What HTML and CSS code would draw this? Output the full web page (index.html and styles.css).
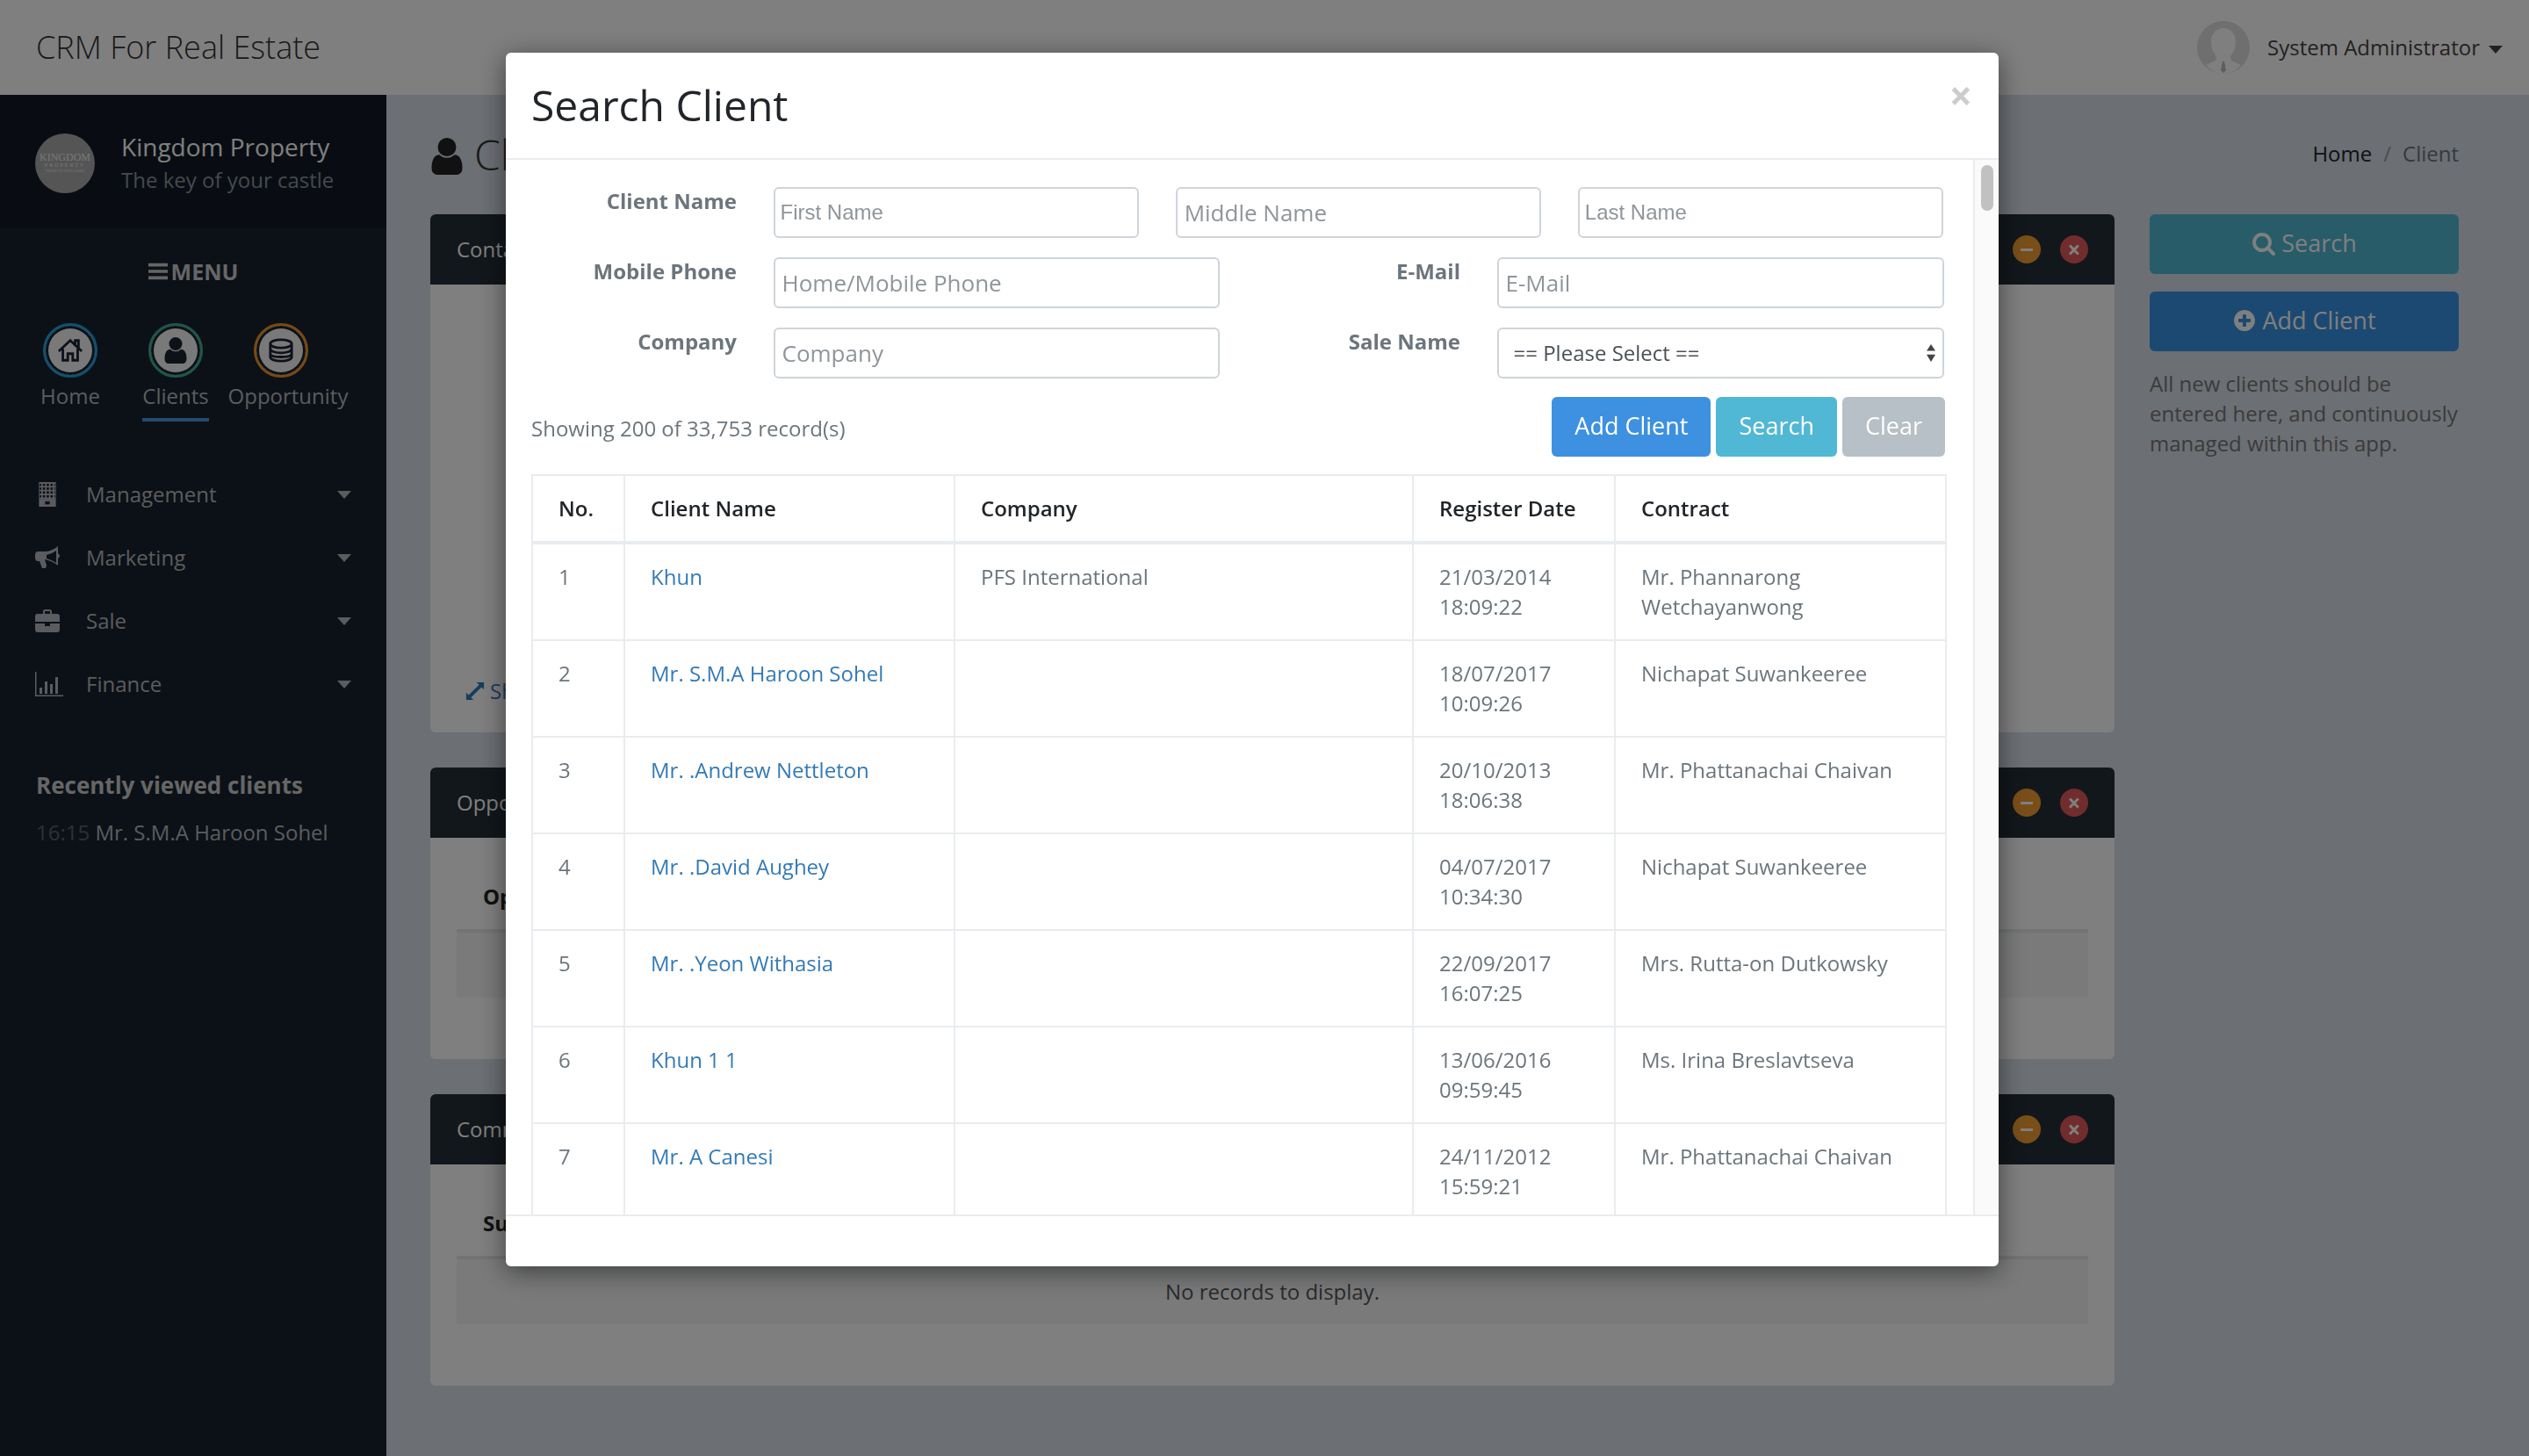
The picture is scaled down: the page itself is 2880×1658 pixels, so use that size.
FILE: index.html
```html
<!DOCTYPE html>
<html lang="en">

<head>
  <meta charset="UTF-8">
  <title>CRM For Real Estate</title>
  <link rel="stylesheet" href="styles.css">
</head>

<body>
  <header class="topbar">
    <div class="brand">CRM For Real Estate</div>
    <div class="user_menu">
      <svg class="avatar" viewBox="0 0 60 60">
        <circle cx="30" cy="30" r="30" fill="#dedede" />
        <path d="M30 8c-9 0-14 7-14 16 0 7 3 13 6 16l-1 5-11 5c5 6 12 10 20 10s15-4 20-10l-11-5-1-5c3-3 6-9 6-16 0-9-5-16-14-16z" fill="#fff" />
        <path d="M29 46h2l2 10-3 3-3-3z" fill="#bbb" />
      </svg>
      <span>System Administrator</span>
      <i class="caret"></i>
    </div>
  </header>

  <div class="layout">
    <aside class="sidebar">
      <div class="side_brand">
        <div class="logo"><b>KINGDOM</b><small>PROPERTY</small><em>THE KEY TO YOUR CASTLE</em></div>
        <div>
          <div class="side_name">Kingdom Property</div>
          <div class="side_tag">The key of your castle</div>
        </div>
      </div>
      <div class="menu_title">
        <svg class="bars" viewBox="0 0 24 20"><path d="M0 0h24v4H0zM0 8h24v4H0zM0 16h24v4H0z" /></svg>MENU
      </div>
      <nav class="shortcuts">
        <a class="shortcut">
          <span class="ring ring_blue">
            <svg class="icon_line" viewBox="0 0 32 32"><path d="M2 17L16 4l14 13M22 9V4h4v9M7 14v14h6v-8h6v8h6V14" /></svg>
          </span>
          <span>Home</span>
        </a>
        <a class="shortcut active">
          <span class="ring ring_green">
            <svg class="icon_bust" viewBox="256 128 1280 1536"><path d="M1536 1399q0 109-62.5 187t-150.5 78h-854q-88 0-150.5-78t-62.5-187q0-85 8.5-160.5t31.5-152 58.5-131 94-89 134.5-34.5q131 128 313 128t313-128q76 0 134.5 34.5t94 89 58.5 131 31.5 152 8.5 160.5zm-256-887q0 159-112.5 271.5t-271.5 112.5-271.5-112.5-112.5-271.5 112.5-271.5 271.5-112.5 271.5 112.5 112.5 271.5z" /></svg>
          </span>
          <span>Clients</span>
        </a>
        <a class="shortcut shortcut_last">
          <span class="ring ring_orange">
            <svg class="icon_line" viewBox="0 0 32 32"><path d="M3 8c0-3 6-5 13-5s13 2 13 5v16c0 3-6 5-13 5S3 27 3 24zM3 8c0 3 6 5 13 5s13-2 13-5M3 14c0 3 6 5 13 5s13-2 13-5M3 20c0 3 6 4 13 4s13-1 13-4" /></svg>
          </span>
          <span>Opportunity</span>
        </a>
      </nav>
      <ul class="side_menu">
        <li>
          <svg class="side_icon" viewBox="0 0 28 32">
            <defs>
              <pattern id="windows" width="5" height="5" patternUnits="userSpaceOnUse" x="3" y="2"><rect width="3" height="3" fill="#18222f" /></pattern>
            </defs>
            <rect x="3" width="22" height="32" />
            <rect x="4" y="2" width="20" height="20" fill="url(#windows)" />
            <rect x="11" y="25" width="6" height="4" fill="#18222f" />
          </svg>
          <span>Management</span><i class="caret"></i>
        </li>
        <li>
          <svg class="side_icon" viewBox="0 0 28 28"><path d="M26 1v8c1 1 2 2 2 3s-1 2-2 3v8c-5-4-10-6-15-7l2 7-1 3H8L5 18H3c-2 0-3-2-3-4v-3c0-2 1-4 3-4h8c5 0 10-2 15-6zm-2 5c-3 2-7 4-11 5v4c4 1 8 3 11 5z" /></svg>
          <span>Marketing</span><i class="caret"></i>
        </li>
        <li>
          <svg class="side_icon" viewBox="0 0 28 28"><path fill-rule="evenodd" d="M9 3c0-1 1-2 2-2h6c1 0 2 1 2 2v3h6c2 0 3 1 3 3v6H0V9c0-2 1-3 3-3h6zm2 0v3h6V3zM0 17h11v3h6v-3h11v7c0 2-1 3-3 3H3c-2 0-3-1-3-3z" /></svg>
          <span>Sale</span><i class="caret"></i>
        </li>
        <li>
          <svg class="side_icon side_icon_wide" viewBox="0 0 32 28"><path d="M0 0h1.500v26.500H32V28H0zM5 18h3v7H5zM11 11h3v14h-3zM17 14h3v11h-3zM23 6h3v19h-3z" /></svg>
          <span>Finance</span><i class="caret"></i>
        </li>
      </ul>
      <div class="recent">
        <h4>Recently viewed clients</h4>
        <p><span class="recent_time">16:15</span> Mr. S.M.A Haroon Sohel</p>
      </div>
    </aside>

    <main class="content">
      <div class="page_head">
        <h1>
          <svg viewBox="256 128 1280 1536"><path d="M1536 1399q0 109-62.5 187t-150.5 78h-854q-88 0-150.5-78t-62.5-187q0-85 8.5-160.5t31.5-152 58.5-131 94-89 134.5-34.5q131 128 313 128t313-128q76 0 134.5 34.5t94 89 58.5 131 31.5 152 8.5 160.5zm-256-887q0 159-112.5 271.5t-271.5 112.5-271.5-112.5-112.5-271.5 112.5-271.5 271.5-112.5 271.5 112.5 112.5 271.5z" /></svg>
          Client
        </h1>
        <div class="breadcrumb"><a>Home</a><i>/</i><span>Client</span></div>
      </div>
      <div class="columns">
        <div class="panels">
          <section class="panel panel_tall">
            <div class="panel_head">
              <span>Contact</span>
              <div class="panel_tools"><i class="tool tool_min"></i><i class="tool tool_close">&times;</i></div>
            </div>
            <div class="panel_body">
              <a class="show_link">
                <svg viewBox="0 0 24 24"><path d="M14 1h9v9l-3-3-13 13 3 3H1v-9l3 3L17 4z" /></svg>
                Show more
              </a>
            </div>
          </section>
          <section class="panel">
            <div class="panel_head">
              <span>Opportunity</span>
              <div class="panel_tools"><i class="tool tool_min"></i><i class="tool tool_close">&times;</i></div>
            </div>
            <div class="panel_body">
              <div class="panel_sub">Opportunity</div>
              <div class="no_records"></div>
            </div>
          </section>
          <section class="panel">
            <div class="panel_head">
              <span>Communication</span>
              <div class="panel_tools"><i class="tool tool_min"></i><i class="tool tool_close">&times;</i></div>
            </div>
            <div class="panel_body">
              <div class="panel_sub">Subject</div>
              <div class="no_records">No records to display.</div>
            </div>
          </section>
        </div>
        <div class="side_actions">
          <a class="action action_search">
            <svg viewBox="0 0 1792 1792"><path d="M1216 832q0-185-131.500-316.500t-316.500-131.500-316.500 131.500-131.500 316.500 131.500 316.500 316.500 131.500 316.500-131.500 131.500-316.500zm512 832q0 52-38 90t-90 38q-54 0-90-38l-343-342q-179 124-399 124-143 0-273.500-55.500t-225-150-150-225-55.500-273.500 55.500-273.500 150-225 225-150 273.500-55.500 273.500 55.500 225 150 150 225 55.500 273.500q0 220-124 399l343 343q37 37 37 90z" /></svg>
            Search
          </a>
          <a class="action action_add">
            <svg viewBox="0 0 1792 1792"><path d="M1344 960v-128q0-26-19-45t-45-19h-256v-256q0-26-19-45t-45-19h-128q-26 0-45 19t-19 45v256h-256q-26 0-45 19t-19 45v128q0 26 19 45t45 19h256v256q0 26 19 45t45 19h128q26 0 45-19t19-45v-256h256q26 0 45-19t19-45zm320-64q0 209-103 385.500t-279.500 279.500-385.500 103-385.500-103-279.500-279.500-103-385.500 103-385.500 279.500-279.500 385.500-103 385.500 103 279.500 279.500 103 385.500z" /></svg>
            Add Client
          </a>
          <p>All new clients should be entered here, and continuously managed within this app.</p>
        </div>
      </div>
    </main>
  </div>

  <div class="backdrop"></div>

  <div class="modal">
    <div class="modal_head">
      <h2>Search Client</h2>
      <span class="modal_close">&times;</span>
    </div>
    <div class="modal_body">
      <div class="modal_scroll">
        <div class="form_row form_row_three">
          <label>Client Name</label>
          <input class="input_small" type="text" placeholder="First Name">
          <input type="text" placeholder="Middle Name">
          <input class="input_small" type="text" placeholder="Last Name">
        </div>
        <div class="form_row">
          <label>Mobile Phone</label>
          <input type="text" placeholder="Home/Mobile Phone">
          <label>E-Mail</label>
          <input type="text" placeholder="E-Mail">
        </div>
        <div class="form_row">
          <label>Company</label>
          <input type="text" placeholder="Company">
          <label>Sale Name</label>
          <div class="select_wrap">
            <select>
              <option>== Please Select ==</option>
            </select>
            <svg viewBox="0 0 12 24"><path d="M6 0l6 9H0zM0 14h12l-6 10z" /></svg>
          </div>
        </div>
        <div class="toolbar">
          <span class="record_count">Showing 200 of 33,753 record(s)</span>
          <div class="toolbar_buttons">
            <button class="btn_primary">Add Client</button>
            <button class="btn_info">Search</button>
            <button class="btn_clear">Clear</button>
          </div>
        </div>
        <table class="client_table">
          <colgroup>
            <col class="col_no">
            <col class="col_name">
            <col class="col_company">
            <col class="col_date">
            <col class="col_contract">
          </colgroup>
          <thead>
            <tr>
              <th>No.</th>
              <th>Client Name</th>
              <th>Company</th>
              <th>Register Date</th>
              <th>Contract</th>
            </tr>
          </thead>
          <tbody>
            <tr>
              <td>1</td>
              <td><a>Khun</a></td>
              <td>PFS International</td>
              <td>21/03/2014<br>18:09:22</td>
              <td>Mr. Phannarong Wetchayanwong</td>
            </tr>
            <tr>
              <td>2</td>
              <td><a>Mr. S.M.A Haroon Sohel</a></td>
              <td></td>
              <td>18/07/2017<br>10:09:26</td>
              <td>Nichapat Suwankeeree</td>
            </tr>
            <tr>
              <td>3</td>
              <td><a>Mr. .Andrew Nettleton</a></td>
              <td></td>
              <td>20/10/2013<br>18:06:38</td>
              <td>Mr. Phattanachai Chaivan</td>
            </tr>
            <tr>
              <td>4</td>
              <td><a>Mr. .David Aughey</a></td>
              <td></td>
              <td>04/07/2017<br>10:34:30</td>
              <td>Nichapat Suwankeeree</td>
            </tr>
            <tr>
              <td>5</td>
              <td><a>Mr. .Yeon Withasia</a></td>
              <td></td>
              <td>22/09/2017<br>16:07:25</td>
              <td>Mrs. Rutta-on Dutkowsky</td>
            </tr>
            <tr>
              <td>6</td>
              <td><a>Khun 1 1</a></td>
              <td></td>
              <td>13/06/2016<br>09:59:45</td>
              <td>Ms. Irina Breslavtseva</td>
            </tr>
            <tr>
              <td>7</td>
              <td><a>Mr. A Canesi</a></td>
              <td></td>
              <td>24/11/2012<br>15:59:21</td>
              <td>Mr. Phattanachai Chaivan</td>
            </tr>
          </tbody>
        </table>
      </div>
      <div class="scroll_track"><div class="scroll_thumb"></div></div>
    </div>
    <div class="modal_foot"></div>
  </div>
</body>

</html>
```

FILE: styles.css
```css
* {
  box-sizing: border-box;
}

html,
body {
  height: 100%;
}

body {
  margin: 0;
  height: 1658px;
  display: flex;
  flex-direction: column;
  overflow: hidden;
  font-family: "Open Sans", sans-serif;
  font-size: 24px;
  line-height: 34px;
  color: #6c757d;
  background: #d8dee8;
}

/* top bar */
.topbar {
  height: 108px;
  flex: none;
  display: flex;
  justify-content: space-between;
  align-items: center;
  padding: 0 30px 0 41px;
  background: #fff;
}

.brand {
  font-size: 36px;
  font-weight: 300;
  color: #333;
}

.user_menu {
  display: flex;
  align-items: center;
  color: #444;
}

.avatar {
  width: 60px;
  height: 60px;
  margin-right: 20px;
}

.caret {
  display: block;
  width: 0;
  height: 0;
  border-top: 9px solid currentColor;
  border-left: 8px solid transparent;
  border-right: 8px solid transparent;
}

.user_menu .caret {
  margin-left: 10px;
  margin-top: 4px;
}

.layout {
  flex: 1;
  display: flex;
  min-height: 0;
}

/* sidebar */
.sidebar {
  width: 440px;
  flex: none;
  background: #18222f;
  color: #fff;
}

.side_brand {
  height: 152px;
  display: flex;
  align-items: center;
  gap: 30px;
  padding: 4px 0 0 40px;
  background: #121a26;
}

.logo {
  width: 68px;
  height: 68px;
  border-radius: 50%;
  background: #aaa;
  display: flex;
  flex-direction: column;
  align-items: center;
  justify-content: center;
  font-family: "Liberation Serif", serif;
  line-height: 9px;
  color: #eee;
}

.logo b {
  font-size: 12px;
  font-weight: 400;
}

.logo small {
  font-size: 6px;
  letter-spacing: 2px;
}

.logo em {
  font-size: 3.5px;
  line-height: 5px;
  font-style: normal;
  white-space: nowrap;
}

.side_name {
  font-size: 28px;
  line-height: 38px;
  font-weight: 500;
}

.side_tag {
  line-height: 38px;
  color: #8c939b;
}

.menu_title {
  height: 98px;
  display: flex;
  justify-content: center;
  align-items: center;
  font-size: 25px;
  font-weight: 700;
  color: #ccc;
}

.bars {
  width: 22px;
  height: 20px;
  margin-right: 4px;
  fill: #ccc;
}

.shortcuts {
  display: flex;
  height: 122px;
  margin-top: 10px;
}

.shortcut {
  position: relative;
  display: flex;
  flex-direction: column;
  align-items: center;
  color: #b4b9be;
}

.shortcut:nth-child(1) {
  width: 160px;
}

.shortcut:nth-child(2) {
  width: 80px;
}

.shortcut_last {
  width: 160px;
  margin-left: 8px;
}

.shortcut_last .ring {
  margin-right: 16px;
}

.ring {
  width: 62px;
  height: 62px;
  border-radius: 50%;
  border: 3px solid;
  display: flex;
  align-items: center;
  justify-content: center;
  margin-bottom: 4px;
  box-shadow: inset 0 0 0 3px #18222f, inset 0 0 0 40px #f2f2f2;
}

.icon_line {
  width: 30px;
  height: 30px;
  fill: none;
  stroke: #1b2530;
  stroke-width: 3;
}

.icon_bust {
  width: 26px;
  height: 30px;
  fill: #1b2530;
}

.ring_blue {
  border-color: #27a3dc;
}

.ring_green {
  border-color: #3fae96;
}

.ring_orange {
  border-color: #f0942a;
}

.shortcut.active::after {
  content: "";
  position: absolute;
  left: 2px;
  right: 2px;
  top: 108px;
  height: 4px;
  background: #4c94d8;
}

.side_menu {
  list-style: none;
  margin: 0;
  padding: 37px 40px 0 40px;
  color: #b4b9be;
}

.side_menu li {
  height: 72px;
  display: flex;
  align-items: center;
}

.side_menu span {
  flex: 1;
}

.side_icon {
  width: 28px;
  height: 28px;
  margin-right: 30px;
  fill: #b4b9be;
}

.side_icon_wide {
  width: 32px;
  margin-right: 26px;
}

.recent {
  margin-top: 62px;
  padding-left: 41px;
}

.recent h4 {
  margin: 0 0 20px;
  font-size: 26px;
  line-height: 34px;
  font-weight: 700;
  color: #ccc;
}

.recent p {
  margin: 0;
  color: #b4b9be;
}

.recent_time {
  color: #5a626b;
}

/* page content */
.content {
  flex: 1;
  padding: 0 80px 0 50px;
}

.page_head {
  height: 136px;
  display: flex;
  justify-content: space-between;
  padding-top: 46px;
}

.page_head h1 {
  margin: 0;
  display: flex;
  align-items: flex-start;
  gap: 12px;
  font-size: 48px;
  line-height: 44px;
  font-weight: 300;
  color: #333;
}

.page_head h1 svg {
  width: 38px;
  height: 42px;
  margin-top: 3px;
  fill: #222;
}

.breadcrumb {
  display: flex;
  color: #6c757d;
  padding-top: 4px;
}

.breadcrumb a {
  color: #222;
}

.breadcrumb i {
  font-style: normal;
  color: #999;
  margin: 0 13px;
}

.columns {
  display: flex;
  gap: 40px;
}

.panels {
  width: 1918px;
  flex: none;
  display: flex;
  flex-direction: column;
  gap: 40px;
}

.panel {
  height: 332px;
  display: flex;
  flex-direction: column;
  background: #fff;
  border-radius: 6px;
}

.panel_tall {
  height: 590px;
}

.panel_head {
  height: 80px;
  flex: none;
  display: flex;
  justify-content: space-between;
  align-items: center;
  padding: 0 30px;
  border-radius: 6px 6px 0 0;
  background: #242e36;
  color: #fff;
}

.panel_tools {
  display: flex;
  gap: 22px;
}

.tool {
  width: 32px;
  height: 32px;
  border-radius: 50%;
  display: flex;
  align-items: center;
  justify-content: center;
  font-style: normal;
  font-weight: 700;
  font-size: 26px;
  color: #fff;
}

.tool_min {
  background: #f29d33;
}

.tool_min::before {
  content: "";
  width: 14px;
  height: 3px;
  background: #fff;
}

.tool_close {
  background: #e2585a;
}

.panel_body {
  flex: 1;
  display: flex;
  flex-direction: column;
  padding: 0 30px;
}

.show_link {
  margin-top: auto;
  margin-bottom: 30px;
  padding-left: 10px;
  display: flex;
  align-items: center;
  gap: 6px;
  color: #337ab7;
}

.show_link svg {
  width: 22px;
  height: 22px;
  fill: #337ab7;
}

.panel_sub {
  margin-top: 50px;
  padding-left: 30px;
  font-weight: 700;
  color: #222;
}

.no_records {
  height: 78px;
  margin-top: 20px;
  display: flex;
  justify-content: center;
  align-items: center;
  border-top: 4px solid #e4e6ea;
  background: #f4f5f7;
  color: #555;
}

.side_actions {
  width: 352px;
  flex: none;
}

.action {
  height: 68px;
  display: flex;
  justify-content: center;
  align-items: center;
  gap: 6px;
  margin-bottom: 20px;
  padding-bottom: 2px;
  border-radius: 6px;
  color: #fff;
  font-size: 27px;
}

.action svg {
  width: 28px;
  height: 28px;
  fill: #fff;
}

.action_search {
  background: #50b8d3;
}

.action_add {
  background: #3893e5;
}

.side_actions p {
  margin: 20px 0 0;
  color: #777;
}

.backdrop {
  position: fixed;
  inset: 0;
  background: rgba(0, 0, 0, .5);
}

/* modal */
.modal {
  position: fixed;
  left: 576px;
  top: 60px;
  width: 1700px;
  height: 1382px;
  display: flex;
  flex-direction: column;
  border-radius: 6px;
  background: #fff;
  box-shadow: 0 6px 30px rgba(0, 0, 0, .5);
}

.modal_head {
  height: 122px;
  flex: none;
  display: flex;
  justify-content: space-between;
  padding: 28px 30px 0 29px;
  border-bottom: 2px solid #e9ecef;
}

.modal_head h2 {
  margin: 0;
  font-size: 48px;
  line-height: 64px;
  font-weight: 400;
  color: #212529;
}

.modal_close {
  font-size: 46px;
  line-height: 40px;
  font-weight: 700;
  color: #ccc;
}

.modal_body {
  flex: 1;
  display: flex;
  min-height: 0;
}

.modal_scroll {
  flex: 1;
  padding: 31px 31px 0 30px;
  overflow: hidden;
}

.scroll_track {
  width: 29px;
  flex: none;
  padding: 6px 6px 0 7px;
  border-left: 2px solid #e9ecef;
  background: #fafafa;
}

.scroll_thumb {
  height: 52px;
  border-radius: 8px;
  background: #c1c1c1;
}

.modal_foot {
  height: 59px;
  flex: none;
  border-top: 2px solid #e9ecef;
}

.form_row {
  display: grid;
  grid-template-columns: 233px 508px 233px 509px;
  column-gap: 41.5px;
  margin-bottom: 22px;
}

.form_row:nth-child(3) {
  margin-bottom: 21px;
}

.form_row_three {
  grid-template-columns: 233px repeat(3, 1fr);
  width: 1607.5px;
}

.form_row label {
  text-align: right;
  line-height: 32px;
  font-weight: 700;
  color: #6c757d;
}

.form_row input,
.form_row select {
  width: 100%;
  height: 58px;
  padding: 0 8px;
  border: 2px solid #ced4da;
  border-radius: 6px;
  outline: none;
  background: #fff;
  font-family: "Open Sans", sans-serif;
  font-size: 26px;
  color: #495057;
}

.form_row input::placeholder {
  color: #8e959b;
  opacity: 1;
}

.form_row .input_small {
  padding: 0 6px;
  font-family: "Liberation Sans", sans-serif;
  font-size: 24px;
}

.select_wrap {
  position: relative;
}

.form_row select {
  appearance: none;
  padding: 0 0 2px 17px;
  font-size: 24px;
}

.select_wrap svg {
  position: absolute;
  right: 10px;
  top: 18px;
  width: 10px;
  height: 22px;
  fill: #444;
}

.toolbar {
  display: flex;
  justify-content: space-between;
  align-items: center;
  height: 68px;
  margin-bottom: 20px;
}

.record_count {
  margin-left: -1px;
  padding-top: 4px;
}

.toolbar_buttons {
  display: flex;
  gap: 6px;
  margin-right: 1px;
}

.toolbar button {
  height: 68px;
  padding: 0 26px 3px;
  border: 0;
  border-radius: 6px;
  font-family: "Open Sans", sans-serif;
  font-size: 27px;
  color: #fff;
}

.btn_primary {
  background: #3d91e0;
}

.btn_info {
  background: #50b8d5;
}

.btn_clear {
  background: #b6c0c6;
}

.client_table {
  width: 1610px;
  margin-left: -1px;
  table-layout: fixed;
  border-collapse: collapse;
}

.col_no {
  width: 105px;
}

.col_name {
  width: 376px;
}

.col_company {
  width: 522px;
}

.col_date {
  width: 230px;
}

.col_contract {
  width: 377px;
}

.client_table th,
.client_table td {
  padding: 20px 29px;
  border: 2px solid #e9ecef;
  text-align: left;
  vertical-align: top;
}

.client_table th {
  height: 77px;
  border-bottom-width: 4px;
  vertical-align: middle;
  font-weight: 600;
  color: #212529;
}

.client_table td {
  height: 110px;
}

.client_table a {
  color: #337ab7;
}
```
